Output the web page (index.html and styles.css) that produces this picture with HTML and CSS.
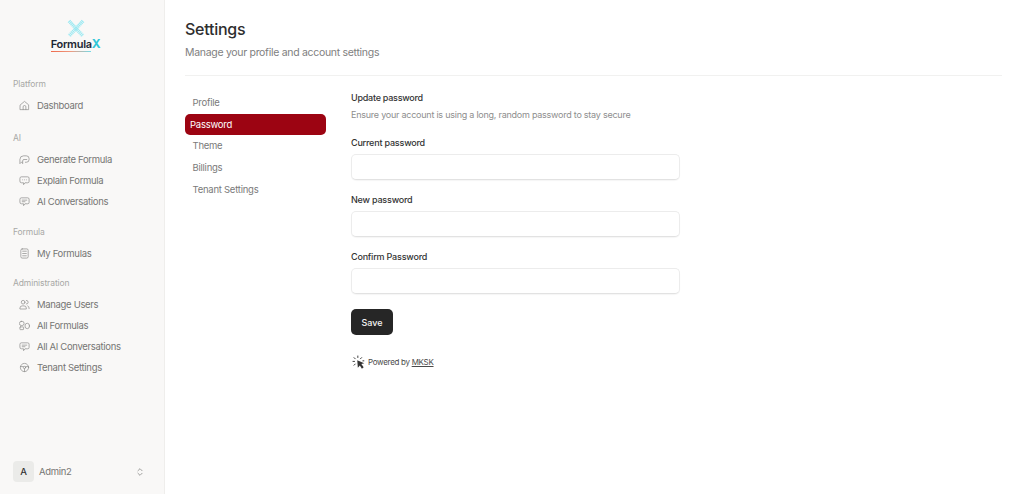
FILE: index.html
```html
<!DOCTYPE html>
<html lang="en">
  <head>
    <meta charset="UTF-8" />
    <title>Settings</title>
    <link rel="stylesheet" href="styles.css">
  </head>
  <body>
    <aside class="sidebar">
      <div class="logo">
        <svg class="logo-x" width="18" height="19" viewBox="0 0 18 19">
          <path d="M2 2 L16 17 M16 2 L2 17" stroke="#9be9f2" stroke-width="3.6" stroke-dasharray="1.2 .5" fill="none"/>
        </svg>
        <div class="logo-text">Formula<span>X</span></div>
        <div class="logo-line"></div>
      </div>

      <div class="nav-group nav-group-top">
        <div class="nav-label">Platform</div>
        <a class="nav-item">
          <svg class="icon" viewBox="0 0 24 24"><path d="M3 10.500 12 3l9 7.500V21H3z"/><path d="M9 21v-6a3 3 0 0 1 6 0v6"/></svg>
          Dashboard
        </a>
      </div>

      <div class="nav-group">
        <div class="nav-label">AI</div>
        <a class="nav-item">
          <svg class="icon" viewBox="0 0 24 24"><path d="M7 18H5l-3 3v-9a8 8 0 0 1 8-8h6a6 6 0 0 1 6 6v2a6 6 0 0 1-6 6h-2"/><path d="M8 21v-6a3 3 0 0 1 3-3h6"/></svg>
          Generate Formula
        </a>
        <a class="nav-item">
          <svg class="icon" viewBox="0 0 24 24"><path d="M2 7a3 3 0 0 1 3-3h14a3 3 0 0 1 3 3v7a3 3 0 0 1-3 3h-6l-3 4v-4H5a3 3 0 0 1-3-3z"/><path d="M8 10.500h.01M12 10.500h.01M16 10.500h.01"/></svg>
          Explain Formula
        </a>
        <a class="nav-item">
          <svg class="icon" viewBox="0 0 24 24"><path d="M2 7a3 3 0 0 1 3-3h14a3 3 0 0 1 3 3v7a3 3 0 0 1-3 3h-6l-3 4v-4H5a3 3 0 0 1-3-3z"/><path d="M7 9h10M7 12.500h6"/></svg>
          AI Conversations
        </a>
      </div>

      <div class="nav-group">
        <div class="nav-label">Formula</div>
        <a class="nav-item">
          <svg class="icon" viewBox="0 0 24 24"><rect x="4" y="2" width="16" height="20" rx="3"/><path d="M8 7h8M8 12h8M8 17h8"/></svg>
          My Formulas
        </a>
      </div>

      <div class="nav-group">
        <div class="nav-label">Administration</div>
        <a class="nav-item">
          <svg class="icon" viewBox="0 0 24 24"><circle cx="9" cy="7" r="4"/><path d="M2 21v-1a5 5 0 0 1 5-5h4a5 5 0 0 1 5 5v1z"/><path d="M16 3a4 4 0 0 1 0 8M19 15a5 5 0 0 1 3 5v1"/></svg>
          Manage Users
        </a>
        <a class="nav-item">
          <svg class="icon" viewBox="0 0 24 24"><rect x="1" y="3" width="10" height="9" rx="4"/><rect x="2" y="15" width="8" height="6" rx="1"/><ellipse cx="18" cy="13" rx="5" ry="6"/></svg>
          All Formulas
        </a>
        <a class="nav-item">
          <svg class="icon" viewBox="0 0 24 24"><path d="M2 7a3 3 0 0 1 3-3h14a3 3 0 0 1 3 3v7a3 3 0 0 1-3 3h-6l-3 4v-4H5a3 3 0 0 1-3-3z"/><path d="M7 9h10M7 12.500h6"/></svg>
          All AI Conversations
        </a>
        <a class="nav-item">
          <svg class="icon" viewBox="0 0 24 24"><circle cx="12" cy="12" r="9"/><circle cx="12" cy="12" r="2.500"/><path d="M3 10h6.500M14.500 10H21M12 14.500V21"/></svg>
          Tenant Settings
        </a>
      </div>

      <div class="user">
        <div class="avatar">A</div>
        <div class="user-name">Admin2</div>
        <svg class="chevrons" viewBox="0 0 24 24"><path d="m7 9 5-5 5 5M7 15l5 5 5-5"/></svg>
      </div>
    </aside>

    <main class="main">
      <h1>Settings</h1>
      <p class="subtitle">Manage your profile and account settings</p>
      <hr class="divider" />

      <div class="settings">
        <nav class="tabs">
          <a class="tab">Profile</a>
          <a class="tab active">Password</a>
          <a class="tab">Theme</a>
          <a class="tab">Billings</a>
          <a class="tab">Tenant Settings</a>
        </nav>

        <form class="form">
          <h2>Update password</h2>
          <p class="hint">Ensure your account is using a long, random password to stay secure</p>

          <label class="field">Current password <input type="password" /></label>
          <label class="field">New password <input type="password" /></label>
          <label class="field">Confirm Password <input type="password" /></label>

          <button type="button" class="save">Save</button>

          <div class="powered">
            <svg class="cursor" viewBox="0 0 24 24">
              <path d="M10 1v4M3 4l3 3M1 11h4M3 18l3-3M17 4l-3 3M21 10h-3"/>
              <path class="solid" d="M9 9l12 5-5 1.500L20 21l-3 2.500-3.500-5.500L10 22z"/>
            </svg>
            <span>Powered by <u>MKSK</u></span>
          </div>
        </form>
      </div>
    </main>
  </body>
</html>
```

FILE: styles.css
```css
* {
  box-sizing: border-box;
}
html,
body {
  height: 100%;
}
body {
  margin: 0;
  display: flex;
  font-family: Inter, sans-serif;
  background: #fff;
  color: #2b2b2b;
  overflow: hidden;
}

/* sidebar */
.sidebar {
  width: 165px;
  flex: none;
  display: flex;
  flex-direction: column;
  background: #f9f8f7;
  border-right: 1px solid #efeeec;
  padding: 19px 13px 12px;
}
.logo {
  display: flex;
  flex-direction: column;
  align-items: center;
  height: 55px;
  margin-right: 13px;
}
.logo-text {
  font-size: 11px;
  font-weight: 600;
  line-height: 12px;
  letter-spacing: -0.3px;
  color: #1d2733;
}
.logo-text span {
  color: #2fc6d8;
  font-size: 12px;
  font-weight: 700;
}
.logo-line {
  align-self: flex-start;
  width: 40px;
  height: 1px;
  margin-top: 1px;
  margin-left: 38px;
  background: linear-gradient(90deg, #ef6a4c, #ee9a80 50%, #74dbe8);
}
.nav-group {
  margin-bottom: 9.500px;
}
.nav-group-top {
  margin-bottom: 12px;
}
.nav-label {
  height: 21px;
  line-height: 21px;
  font-size: 8.500px;
  letter-spacing: -0.1px;
  color: #a8a8a6;
}
.nav-item {
  display: flex;
  align-items: center;
  gap: 7px;
  height: 21px;
  padding-left: 6px;
  font-size: 9.500px;
  letter-spacing: -0.32px;
  color: #767674;
  white-space: nowrap;
}
.icon {
  width: 11px;
  height: 11px;
  flex: none;
  fill: none;
  stroke: #8f8f8d;
  stroke-width: 1.600;
  stroke-linecap: round;
  stroke-linejoin: round;
}
.user {
  margin-top: auto;
  display: flex;
  align-items: center;
  gap: 5px;
}
.avatar {
  width: 21px;
  height: 21px;
  border-radius: 4px;
  background: #ebebe9;
  display: flex;
  align-items: center;
  justify-content: center;
  font-size: 9.500px;
  font-weight: 500;
  color: #333;
}
.user-name {
  font-size: 9.500px;
  letter-spacing: -0.3px;
  color: #767674;
}
.chevrons {
  width: 10px;
  height: 10px;
  margin-left: auto;
  margin-right: 6px;
  fill: none;
  stroke: #8f8f8d;
  stroke-width: 2;
  stroke-linecap: round;
  stroke-linejoin: round;
}

/* main */
.main {
  flex: 1;
  padding: 20px 22px 0 20px;
}
h1 {
  margin: 0;
  font-size: 16px;
  font-weight: 500;
  line-height: 19px;
  letter-spacing: -0.25px;
  color: #2e2e2e;
}
.subtitle {
  margin: 6px 0 0;
  font-size: 10.500px;
  line-height: 16px;
  letter-spacing: -0.3px;
  color: #808080;
}
.divider {
  margin: 14px 0 0;
  border: 0;
  border-top: 1px solid #f1f1f0;
}
.settings {
  display: flex;
  gap: 25px;
  padding-top: 15px;
}
.tabs {
  width: 141px;
  flex: none;
  padding-top: 1px;
  display: flex;
  flex-direction: column;
  gap: 0.700px;
}
.tab {
  height: 21px;
  line-height: 21px;
  padding-left: 7.500px;
  font-size: 9.500px;
  letter-spacing: -0.25px;
  color: #7a7a7a;
}
.tab.active {
  background: #9c0412;
  color: #fff;
  border-radius: 5px;
  padding-left: 5px;
}
.form {
  width: 329px;
}
h2 {
  margin: 0;
  font-size: 9px;
  font-weight: 500;
  line-height: 14px;
  letter-spacing: -0.25px;
  color: #333;
}
.hint {
  margin: 3px 0 0;
  font-size: 9px;
  line-height: 14px;
  letter-spacing: -0.24px;
  color: #8e8e8e;
}
.field {
  display: block;
  margin-top: 14px;
  font-size: 9px;
  font-weight: 500;
  line-height: 14px;
  letter-spacing: -0.2px;
  color: #333;
}
.field + .field {
  margin-top: 13px;
}
.field input {
  display: block;
  width: 100%;
  height: 26px;
  margin-top: 4px;
  border: 1px solid #ececec;
  border-bottom-color: #e2e2e2;
  border-radius: 5px;
  background: #fff;
  box-shadow: 0 1px 1px rgba(0, 0, 0, 0.04);
}
.save {
  display: block;
  width: 42px;
  height: 26px;
  margin-top: 15px;
  border: 0;
  border-radius: 5px;
  background: #262626;
  color: #f4f4f4;
  font-family: inherit;
  font-size: 9px;
  font-weight: 500;
}
.powered {
  display: flex;
  align-items: center;
  gap: 2px;
  margin-top: 20px;
  padding-left: 1px;
  font-size: 8px;
  letter-spacing: -0.3px;
  color: #4a4a4a;
}
.cursor {
  width: 14px;
  height: 14px;
  fill: none;
  stroke: #333;
  stroke-width: 1.600;
}
.cursor .solid {
  fill: #333;
  stroke: none;
}
```
